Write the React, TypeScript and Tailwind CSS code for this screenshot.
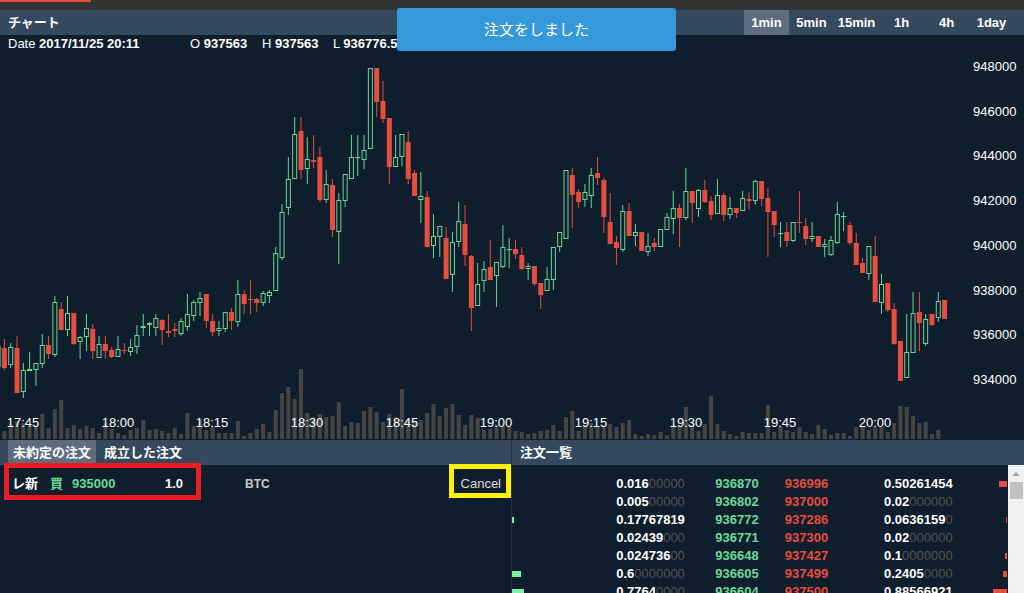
import React, { useState } from 'react';

// [high, bodyTop, bodyBottom, low, volumeTop, rising]
type Candle = [number, number, number, number, number, 0 | 1];

const candles: Candle[] = [
    [339, 348, 368, 370, 431, 0], [343, 347, 365, 368, 424, 1], [336, 348, 393, 393, 421, 0], [363, 370, 392, 398, 423, 1], [352, 369, 371, 371, 426, 1],
    [363, 363, 370, 386, 426, 1], [334, 345, 364, 368, 414, 1], [336, 345, 354, 359, 428, 0], [296, 302, 355, 357, 409, 1], [302, 309, 330, 330, 400, 0],
    [296, 313, 330, 336, 428, 1], [313, 313, 344, 345, 425, 0], [336, 337, 342, 359, 429, 1], [314, 328, 337, 351, 426, 1], [324, 329, 351, 359, 428, 0],
    [336, 344, 358, 358, 433, 1], [336, 344, 351, 359, 423, 0], [347, 350, 357, 358, 429, 0], [336, 349, 357, 357, 433, 1], [343, 350, 351, 354, 435, 0],
    [339, 347, 352, 356, 430, 1], [325, 335, 347, 354, 428, 1], [314, 326, 328, 336, 420, 1], [322, 323, 325, 336, 430, 1], [314, 318, 328, 336, 429, 1],
    [319, 320, 330, 345, 431, 0], [314, 331, 333, 337, 433, 0], [323, 329, 331, 337, 428, 0], [318, 321, 334, 336, 434, 1], [294, 314, 327, 331, 413, 1],
    [300, 302, 316, 321, 426, 1], [292, 298, 303, 316, 420, 1], [294, 294, 321, 328, 430, 0], [314, 321, 332, 336, 427, 0], [321, 328, 331, 336, 433, 1],
    [312, 312, 329, 332, 433, 1], [308, 312, 321, 330, 433, 0], [280, 294, 322, 327, 421, 1], [290, 294, 304, 314, 436, 0], [280, 299, 300, 314, 433, 0],
    [298, 299, 303, 312, 429, 0], [291, 293, 303, 306, 424, 1], [290, 292, 296, 303, 432, 1], [247, 253, 291, 291, 410, 1], [204, 212, 258, 260, 393, 1],
    [157, 179, 208, 215, 387, 1], [117, 134, 179, 179, 399, 1], [117, 131, 170, 179, 369, 0], [137, 159, 169, 184, 413, 1], [135, 160, 162, 168, 417, 0],
    [147, 157, 200, 202, 414, 0], [170, 184, 200, 203, 417, 1], [179, 185, 230, 237, 416, 0], [193, 200, 232, 264, 402, 1], [174, 174, 201, 207, 426, 1],
    [135, 157, 179, 179, 422, 1], [135, 157, 158, 176, 423, 1], [135, 150, 160, 169, 411, 1], [68, 68, 149, 149, 407, 1], [68, 68, 102, 117, 412, 0],
    [81, 101, 119, 123, 422, 0], [118, 118, 167, 184, 414, 0], [135, 157, 167, 167, 417, 1], [134, 134, 157, 166, 389, 1], [131, 142, 179, 184, 420, 0],
    [170, 173, 196, 196, 420, 0], [172, 196, 200, 223, 420, 1], [191, 197, 247, 247, 413, 0], [214, 236, 246, 258, 404, 1], [226, 226, 237, 257, 416, 1],
    [227, 238, 279, 279, 408, 0], [232, 242, 275, 292, 404, 1], [202, 221, 242, 247, 415, 1], [205, 224, 255, 266, 425, 0], [255, 256, 308, 331, 415, 0],
    [263, 284, 306, 306, 418, 1], [261, 269, 281, 292, 430, 1], [240, 267, 280, 280, 429, 0], [262, 262, 276, 307, 425, 1], [225, 247, 267, 268, 426, 1],
    [238, 249, 250, 268, 427, 1], [240, 249, 254, 259, 431, 0], [247, 255, 269, 270, 432, 0], [263, 266, 269, 280, 434, 1], [266, 266, 284, 286, 433, 0],
    [283, 283, 295, 309, 431, 0], [267, 279, 291, 291, 430, 1], [247, 247, 280, 290, 425, 1], [232, 232, 247, 252, 431, 1], [170, 170, 239, 239, 417, 1],
    [168, 175, 195, 228, 411, 0], [189, 192, 202, 208, 431, 0], [184, 192, 200, 207, 425, 1], [168, 175, 196, 208, 423, 1], [157, 173, 178, 185, 426, 0],
    [178, 180, 217, 233, 427, 0], [193, 222, 244, 244, 424, 0], [236, 242, 248, 265, 427, 0], [205, 211, 250, 252, 423, 1], [203, 211, 236, 236, 420, 0],
    [224, 232, 236, 246, 434, 1], [232, 232, 251, 251, 436, 0], [233, 246, 252, 256, 434, 1], [238, 243, 247, 251, 435, 0], [229, 229, 247, 247, 432, 1],
    [213, 217, 230, 230, 435, 1], [191, 208, 219, 234, 425, 1], [204, 208, 218, 247, 426, 0], [168, 191, 218, 220, 407, 1], [191, 191, 203, 223, 425, 0],
    [189, 190, 209, 217, 431, 1], [180, 190, 202, 203, 424, 0], [196, 201, 215, 220, 396, 0], [179, 195, 214, 214, 424, 1], [193, 195, 215, 221, 431, 0],
    [197, 208, 215, 219, 434, 1], [208, 208, 213, 218, 436, 0], [191, 198, 211, 211, 432, 1], [192, 199, 201, 210, 433, 0], [180, 181, 201, 205, 433, 1],
    [181, 181, 199, 206, 433, 0], [188, 198, 212, 257, 405, 0], [211, 211, 225, 237, 432, 0], [222, 233, 234, 247, 427, 1], [222, 232, 241, 247, 430, 0],
    [222, 222, 241, 242, 432, 1], [191, 222, 223, 233, 427, 0], [218, 226, 239, 245, 432, 0], [222, 236, 239, 242, 434, 1], [236, 236, 247, 247, 425, 0],
    [239, 244, 247, 257, 429, 1], [236, 240, 255, 256, 435, 1], [202, 214, 243, 244, 433, 1], [212, 216, 217, 231, 433, 1], [222, 225, 243, 245, 436, 0],
    [233, 243, 265, 265, 427, 0], [258, 263, 273, 273, 427, 0], [246, 246, 274, 280, 430, 1], [236, 256, 302, 302, 427, 0], [274, 284, 303, 314, 427, 1],
    [283, 283, 310, 312, 432, 0], [303, 309, 344, 345, 423, 0], [341, 341, 381, 381, 406, 0], [314, 352, 378, 378, 407, 1], [292, 313, 353, 353, 416, 1],
    [292, 312, 323, 351, 423, 0], [314, 319, 344, 346, 422, 1], [314, 314, 325, 326, 434, 0], [292, 301, 318, 322, 430, 1], [300, 300, 319, 319, 439, 0],
];

const FIRST_X = 4.4;
const STEP = 6.31;
const BASE_Y = 439;

const prices = [948000, 946000, 944000, 942000, 940000, 938000, 936000, 934000];
const times = ['17:45', '18:00', '18:15', '18:30', '18:45', '19:00', '19:15', '19:30', '19:45', '20:00'];
const periods = ['1min', '5min', '15min', '1h', '4h', '1day'];

const book = [
    { bidSize: '0.016', bid: 936870, ask: 936996, askSize: '0.50261454', bidBar: 0, askBar: 8 },
    { bidSize: '0.005', bid: 936802, ask: 937000, askSize: '0.02', bidBar: 0, askBar: 0 },
    { bidSize: '0.17767819', bid: 936772, ask: 937286, askSize: '0.0636159', bidBar: 2, askBar: 1 },
    { bidSize: '0.02439', bid: 936771, ask: 937300, askSize: '0.02', bidBar: 0, askBar: 0 },
    { bidSize: '0.024736', bid: 936648, ask: 937427, askSize: '0.1', bidBar: 0, askBar: 2 },
    { bidSize: '0.6', bid: 936605, ask: 937499, askSize: '0.2405', bidBar: 9, askBar: 4 },
    { bidSize: '0.7764', bid: 936604, ask: 937500, askSize: '0.88566921', bidBar: 12, askBar: 14 },
];

const Size: React.FC<{ value: string }> = ({ value }) => (
    <>
        <span className="font-bold text-white">{value}</span>
        <span className="text-[#505355]">{'0'.repeat(10 - value.length)}</span>
    </>
);

const CandleChart: React.FC = () => (
    <svg viewBox="0 53 1024 387" className="block w-full" role="img" aria-label="BTC chart">
        {candles.map(([high, top, bottom, low, volume, rising], i) => {
            const x = FIRST_X + STEP * i;
            const height = Math.max(bottom - top, 1);
            return (
                <g key={i}>
                    <rect x={x - 2} y={volume} width="4" height={BASE_Y - volume} fill="#454545" />
                    {rising ? (
                        <g stroke="#66d69a" strokeWidth="1" fill="none">
                            <path d={`M${x} ${high}V${top}M${x} ${bottom}V${low}`} />
                            <rect x={x - 2} y={top + 0.5} width="4" height={Math.max(height - 1, 0.1)} />
                        </g>
                    ) : (
                        <g fill="#e74c3c">
                            <rect x={x - 0.5} y={high} width="1" height={low - high} />
                            <rect x={x - 2.5} y={top} width="5" height={height} />
                        </g>
                    )}
                </g>
            );
        })}
        {/* candle that is scrolling off the left edge */}
        <rect x="0" y="346" width="1" height="21" fill="#3f8f6c" />
        <g fill="#ffffff" fontSize="13">
            {prices.map((price, i) => (
                <text key={price} x="973" y={71 + Math.round(i * 44.7)}>{price}</text>
            ))}
            {times.map((time, i) => (
                <text key={time} x={23 + Math.round(i * 94.65)} y="427" textAnchor="middle">{time}</text>
            ))}
        </g>
    </svg>
);

export default function App() {
    const [period, setPeriod] = useState('1min');
    const [tab, setTab] = useState('open');

    const tabItems = [
        { id: 'open', name: '未約定の注文' },
        { id: 'filled', name: '成立した注文' },
    ];

    return (
        <div className="relative flex h-screen flex-col overflow-hidden bg-[#0f1e2c] font-['Liberation_Sans','Noto_Sans_CJK_JP',sans-serif] text-[13px] leading-[18px] text-white">
            <div className="h-[10px] shrink-0 bg-[#333333]">
                <div className="h-[2px] w-[91px] bg-[#e74c3c]" />
            </div>

            <header className="flex h-[25px] shrink-0 items-stretch justify-between bg-[#34495e] pr-[10px] pl-2 font-bold">
                <h1 className="self-center">チャート</h1>
                <nav className="flex">
                    {periods.map(p => (
                        <button
                            key={p}
                            onClick={() => setPeriod(p)}
                            className={`w-[45px] text-center ${p === period ? 'bg-[#5d6d7e]' : ''}`}
                        >
                            {p}
                        </button>
                    ))}
                </nav>
            </header>

            <div className="flex h-[18px] shrink-0 px-2 whitespace-nowrap">
                <span className="w-[182px]">Date <b>2017/11/25 20:11</b></span>
                <span className="w-[72px]">O <b>937563</b></span>
                <span className="w-[71px]">H <b>937563</b></span>
                <span>L <b>936776.5</b></span>
            </div>
            <CandleChart />

            <div className="grid min-h-0 flex-1 grid-cols-2">
                <section className="flex min-w-0 flex-col border-r border-[#22303e]">
                    <div className="flex h-[25px] shrink-0 bg-[#34495e] pl-2 font-bold">
                        {tabItems.map(t => (
                            <button
                                key={t.id}
                                onClick={() => setTab(t.id)}
                                className={`mr-[3px] px-[5px] ${t.id === tab ? 'bg-[#5d6d7e]' : ''}`}
                            >
                                {t.name}
                            </button>
                        ))}
                    </div>
                    <div className="relative pt-[10px] pl-3">
                        <table className="w-full table-fixed text-left font-bold">
                            <tbody>
                                <tr>
                                    <td className="w-[38px] whitespace-nowrap">レ新</td>
                                    <td className="w-[22px] text-[#66dc98]">買</td>
                                    <td className="w-[93px] text-[#66dc98]">935000</td>
                                    <td className="w-[80px]">1.0</td>
                                    <td className="text-[12px] text-[#cccccc]">BTC</td>
                                    <td className="w-20 pr-[10px] text-right font-normal text-[#dddddd]">
                                        <button>Cancel</button>
                                    </td>
                                </tr>
                            </tbody>
                        </table>
                        <div className="pointer-events-none absolute -top-[2px] left-1 h-[37px] w-[197px] border-[5px] border-[#ed1c24]" />
                        <div className="pointer-events-none absolute -top-px right-0 h-[34px] w-[62px] border-[5px] border-[#fff200]" />
                    </div>
                </section>

                <section className="flex min-h-0 min-w-0 flex-col">
                    <div className="flex h-[25px] shrink-0 items-center bg-[#34495e] px-2">
                        <h2 className="font-bold">注文一覧</h2>
                    </div>
                    <div className="flex min-h-0 flex-1">
                        <div className="min-w-0 flex-1 overflow-hidden pt-[10px]">
                            <table className="w-full table-fixed text-left">
                                <tbody>
                                    {book.map(row => (
                                        <tr key={row.bid} className="h-[18px]">
                                            <td className="w-[21%]">
                                                <div className="h-[6px] bg-[#7bf2a7]" style={{ width: row.bidBar }} />
                                            </td>
                                            <td className="w-[20%]"><Size value={row.bidSize} /></td>
                                            <td className="w-[14%] font-bold text-[#66dc98]">{row.bid}</td>
                                            <td className="w-[20%] font-bold text-[#e74c3c]">{row.ask}</td>
                                            <td className="w-[14%]"><Size value={row.askSize} /></td>
                                            <td className="pr-px">
                                                <div className="ml-auto h-[6px] bg-[#e74c3c]" style={{ width: row.askBar }} />
                                            </td>
                                        </tr>
                                    ))}
                                </tbody>
                            </table>
                        </div>
                        <div className="flex w-4 flex-col items-center bg-[#f1f1f1]">
                            <svg viewBox="0 0 16 17" className="h-[17px] w-4">
                                <path d="M8 7l3.5 4h-7z" fill="#a3a3a3" />
                            </svg>
                            <div className="h-[17px] w-[13px] bg-[#c1c1c1]" />
                        </div>
                    </div>
                </section>
            </div>

            <div role="status" className="absolute top-2 left-[397px] flex h-[43px] w-[279px] items-center justify-center rounded-[3px] bg-[#3498db] text-[15px]">
                注文をしました
            </div>
        </div>
    );
}
